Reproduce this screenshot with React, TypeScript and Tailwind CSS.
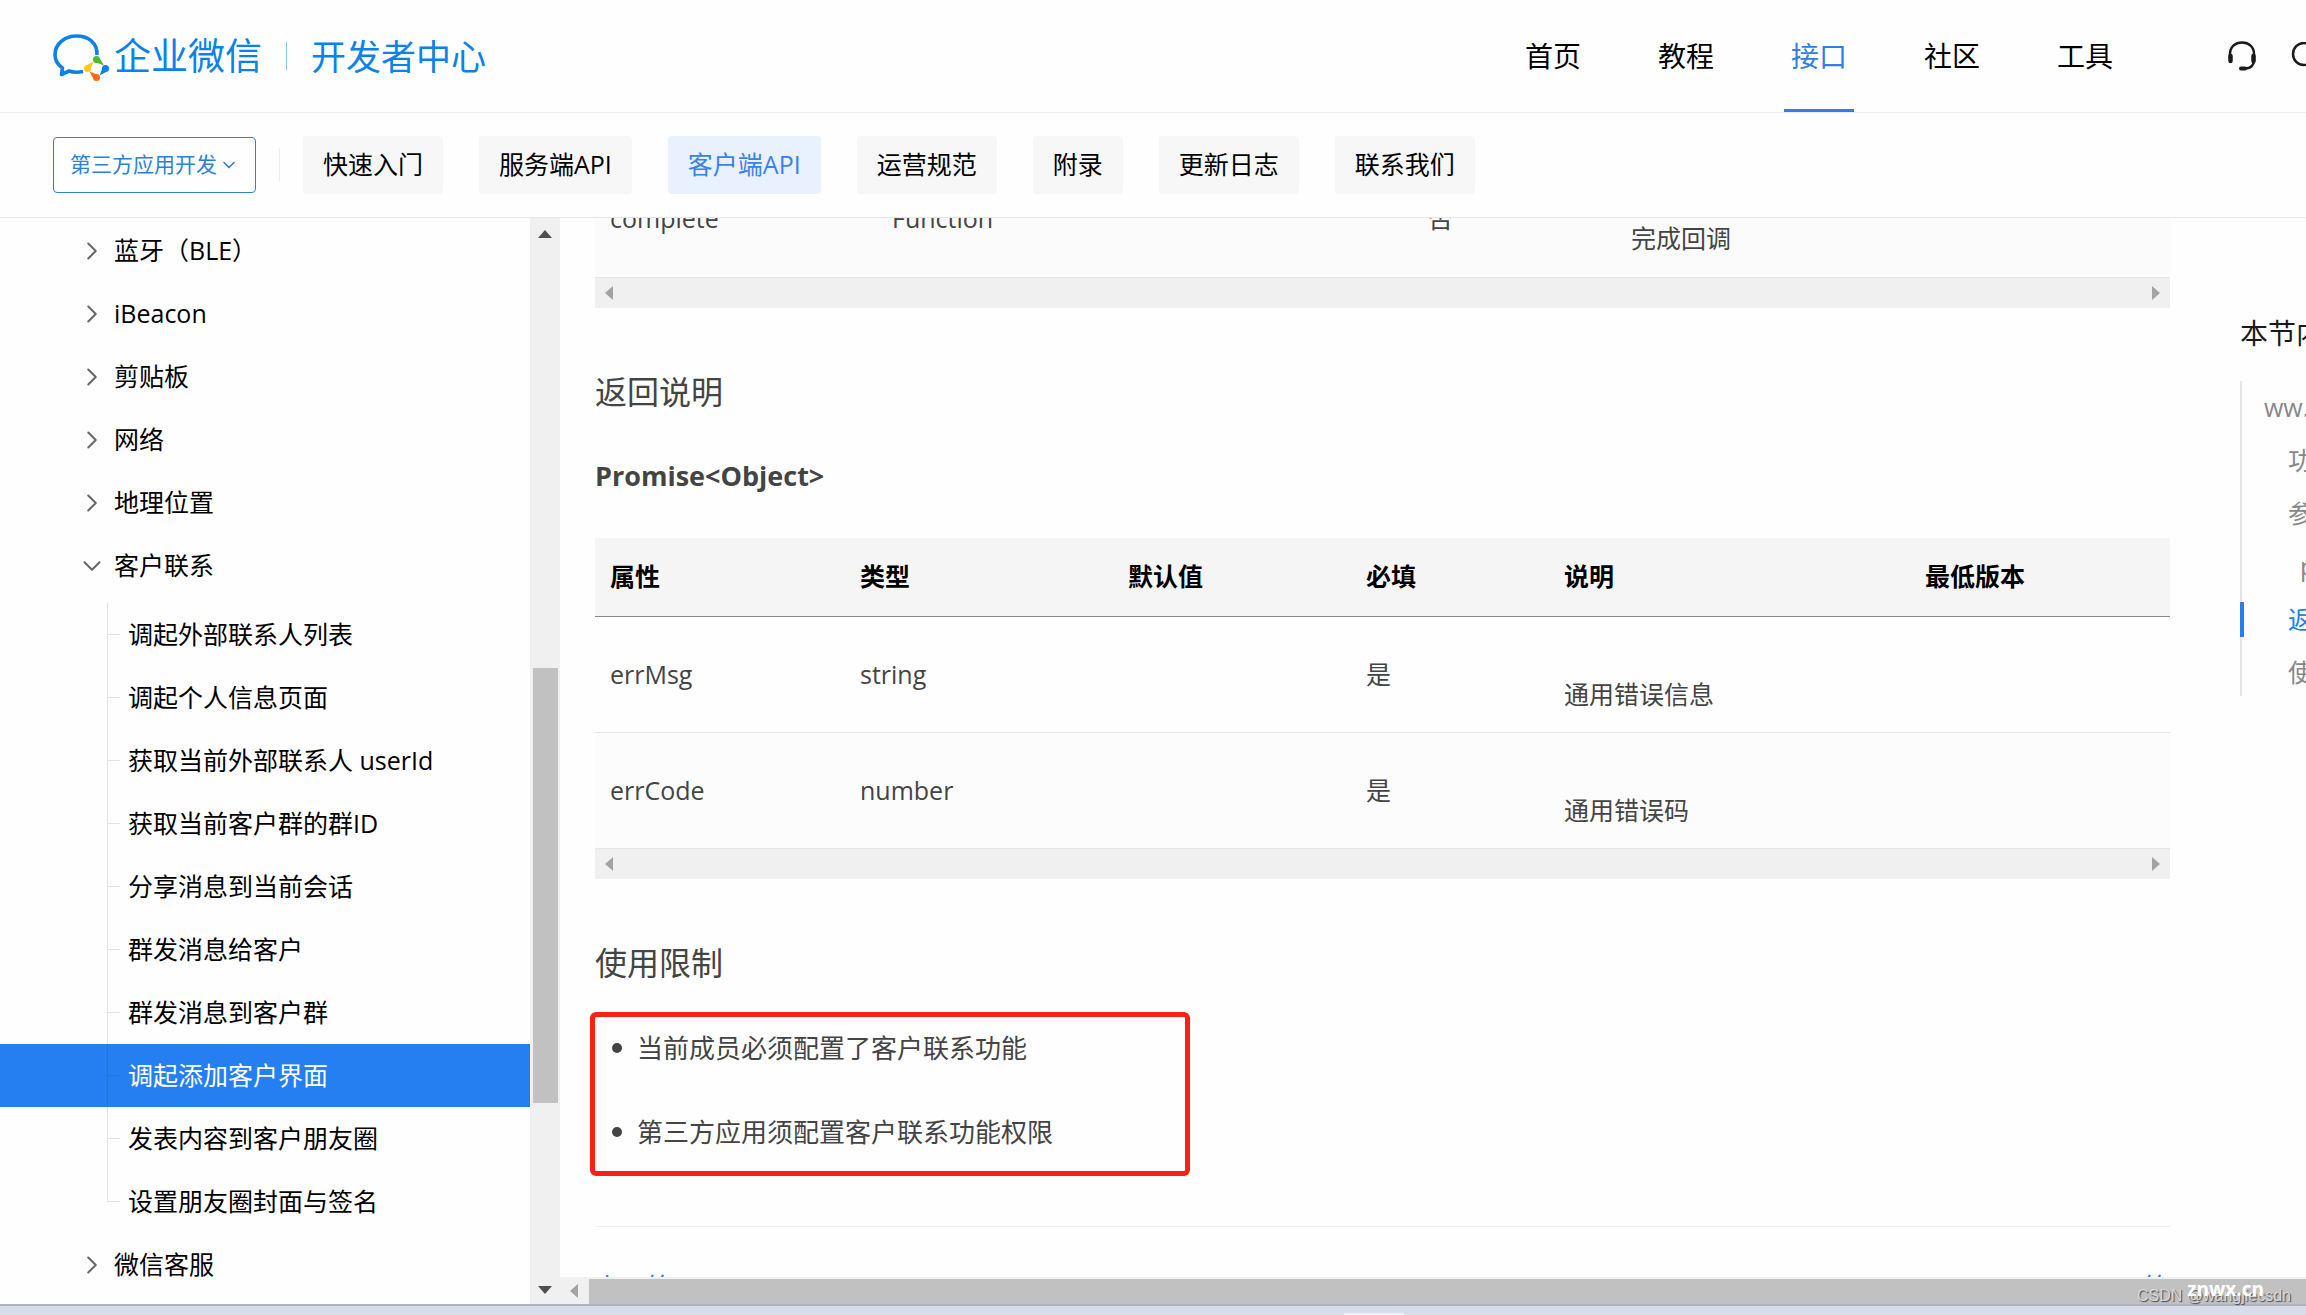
import { ChevronDown, ChevronRight } from "lucide-react";

const navItems = ["首页", "教程", "接口", "社区", "工具"];
const tabs = ["快速入门", "服务端API", "客户端API", "运营规范", "附录", "更新日志", "联系我们"];
const menus = ["蓝牙（BLE）", "iBeacon", "剪贴板", "网络", "地理位置"];
const subMenus = [
    "调起外部联系人列表",
    "调起个人信息页面",
    "获取当前外部联系人 userId",
    "获取当前客户群的群ID",
    "分享消息到当前会话",
    "群发消息给客户",
    "群发消息到客户群",
    "调起添加客户界面",
    "发表内容到客户朋友圈",
    "设置朋友圈封面与签名",
];
const toc = [
    { label: "ww.navigateToAddCustomer", indent: "pl-[22px]" },
    { label: "功能说明", indent: "pl-[46px]" },
    { label: "参数说明", indent: "pl-[46px]" },
    { label: "params", indent: "pl-[58px]" },
    { label: "返回说明", indent: "pl-[46px]", active: true },
    { label: "使用限制", indent: "pl-[46px]" },
];
const rows = [
    { name: "errMsg", type: "string", required: "是", desc: "通用错误信息" },
    { name: "errCode", type: "number", required: "是", desc: "通用错误码" },
];

function Logo() {
    return (
        <svg width="57" height="50" viewBox="0 0 57 50" fill="none" aria-hidden="true">
            <path
                d="M44 24C44.5 12 35.5 5 23.5 5C11.500 5 2 13 2 23.500C2 29.500 5 34 9.500 37L8.500 43.500L16 40C20 41.500 25 41.500 30 40.500"
                stroke="#0a82e6"
                strokeWidth="3.6"
                strokeLinejoin="round"
            />
            <g fill="#4cbb2c">
                <circle cx="43.500" cy="28.500" r="3.500" />
                <path d="M46.800 27.500L51 34.500L40.500 30.500Z" />
            </g>
            <g fill="#0a82e6">
                <circle cx="52.500" cy="37.500" r="3.500" />
                <path d="M53.500 40.800L46.500 44.500L50.500 34.500Z" />
            </g>
            <g fill="#fb6a10">
                <circle cx="43.500" cy="46.500" r="3.500" />
                <path d="M40.200 47.500L36.500 40.500L46.500 44.500Z" />
            </g>
            <g fill="#fccb0c">
                <circle cx="34.500" cy="37.500" r="3.500" />
                <path d="M33.500 34.200L40.500 30.500L36.500 40.500Z" />
            </g>
        </svg>
    );
}

function HeadsetIcon() {
    return (
        <svg width="30" height="30" viewBox="0 0 30 30" fill="none" stroke="#1a1a1a" strokeLinecap="round" aria-hidden="true">
            <path d="M3 17V13C3 6 8 1.500 15 1.500S27 6 27 13V19C27 24 24 27.500 18 27.500" strokeWidth="2.500" />
            <path d="M3.500 15V20M26.500 15V20" strokeWidth="4.500" />
            <path d="M14 27.500H18" strokeWidth="4" />
        </svg>
    );
}

function SearchIcon() {
    return (
        <svg width="28" height="28" viewBox="0 0 28 28" fill="none" stroke="#1a1a1a" strokeWidth="2.500" aria-hidden="true">
            <circle cx="13" cy="12" r="11" />
            <path d="M21 20L27 26" strokeLinecap="round" />
        </svg>
    );
}

/* horizontal scrollbar under each table */
function TableScrollbar() {
    return (
        <div className="h-[30px] bg-[#f0f0f0] flex items-center justify-between px-[10px]">
            <svg width="8" height="14" fill="#a3a3a3" aria-hidden="true"><path d="M8 0V14L0 7Z" /></svg>
            <svg width="8" height="14" fill="#a3a3a3" aria-hidden="true"><path d="M0 0V14L8 7Z" /></svg>
        </div>
    );
}

function MenuRow({ label, open }: { label: string; open?: boolean }) {
    return (
        <a href="#" className="h-[63px] pl-[77px] flex items-center gap-[7px]">
            {open
                ? <ChevronDown size={30} strokeWidth={1.6} className="text-[#666]" />
                : <ChevronRight size={30} strokeWidth={1.6} className="text-[#666]" />}
            <span>{label}</span>
        </a>
    );
}

export default function App() {
    return (
        <div className="relative h-screen flex flex-col overflow-hidden bg-[#fefefe] text-black text-[25px] whitespace-nowrap font-['Open_Sans','Noto_Sans_CJK_SC',sans-serif]">
            {/* Header */}
            <header className="h-[113px] shrink-0 border-b border-[#ececec] flex items-center pl-[53px] overflow-hidden">
                <a href="#" className="flex items-center gap-[4px] text-[#0a82e6] text-[37px]">
                    <Logo />
                    <span>企业微信</span>
                </a>
                <div className="w-px h-[28px] bg-[#8fc0ea] mx-[24px]" />
                <a href="#" className="pt-[2px] text-[#0a82e6] text-[35px]">开发者中心</a>
                <nav className="ml-auto h-full flex gap-[63px] text-[28px]">
                    {navItems.map((n) => (
                        <a
                            key={n}
                            href="#"
                            className={`w-[70px] h-full flex items-center justify-center border-y-3 border-t-transparent ${n === "接口"
                                ? "border-b-[#2f7fe6] text-[#2f7fe6]"
                                : "border-b-transparent"
                                }`}
                        >
                            {n}
                        </a>
                    ))}
                </nav>
                <button className="ml-[107px]" aria-label="客服"><HeadsetIcon /></button>
                <button className="ml-[34px] -mr-[13px] shrink-0" aria-label="搜索"><SearchIcon /></button>
            </header>

            {/* Tabs */}
            <div className="h-[105px] shrink-0 border-b border-[#e6e6e6] flex items-center pl-[53px]">
                <button className="w-[203px] h-[56px] border border-[#2f7fd8] rounded text-[#2f7fd8] text-[21px] flex items-center justify-center gap-[2px]">
                    第三方应用开发
                    <ChevronDown size={20} strokeWidth={2} />
                </button>
                <div className="w-px h-[34px] bg-[#ececec] mx-[23px]" />
                <div className="flex gap-[36px]">
                    {tabs.map((t) => (
                        <button
                            key={t}
                            className={`h-[58px] px-[20px] rounded ${t === "客户端API"
                                ? "bg-[#e8f1fd] text-[#3b82e8]"
                                : "bg-[#f7f7f7]"
                                }`}
                        >
                            {t}
                        </button>
                    ))}
                </div>
            </div>

            <div className="flex-1 min-h-0 flex">
                {/* Sidebar */}
                <aside className="w-[530px] shrink-0 pt-px overflow-hidden">
                    {menus.map((m) => <MenuRow key={m} label={m} />)}
                    <MenuRow label="客户联系" open />
                    <ul className="mt-[6px]">
                        {subMenus.map((s, i) => {
                            const active = s === "调起添加客户界面";
                            const last = i === subMenus.length - 1;
                            return (
                                <li key={s} className={`h-[63px] pl-[107px] flex ${active ? "bg-[#257ff0] text-white" : ""}`}>
                                    <div className={`w-px ${last ? "h-[32px]" : "h-full"} ${active ? "bg-[#2476de]" : "bg-[#e2e2e2]"}`} />
                                    <div className={`w-[12px] h-[32px] border-b ${active ? "border-[#2476de]" : "border-[#e2e2e2]"}`} />
                                    <a href="#" className="pl-[8px] flex items-center">{s}</a>
                                </li>
                            );
                        })}
                    </ul>
                    <MenuRow label="微信客服" />
                </aside>

                {/* Sidebar scrollbar */}
                <div className="w-[30px] shrink-0 bg-[#f0f0f0] flex flex-col items-center justify-between pt-[12px] pb-[10px]">
                    <svg width="14" height="8" fill="#505050" aria-hidden="true"><path d="M0 8H14L7 0Z" /></svg>
                    <div className="w-full flex-1 flex flex-col items-center">
                        <div className="grow-[431]" />
                        <div className="w-[25px] grow-[436] bg-[#c1c1c1]" />
                        <div className="grow-[183]" />
                    </div>
                    <svg width="14" height="8" fill="#505050" aria-hidden="true"><path d="M0 0H14L7 8Z" /></svg>
                </div>

                <div className="flex-1 min-w-0 flex flex-col">
                    <div className="flex-1 min-h-0 flex gap-[70px] pl-[35px] overflow-hidden">
                        <main className="flex-1 min-w-0 text-[#444]">
                            <table className="-mt-[57px] w-full table-fixed text-left bg-[#fbfbfb] border-b border-[#e6e6e6]">
                                <tbody>
                                    <tr className="h-[116px]">
                                        <td className="w-[282px] pl-[15px]">complete</td>
                                        <td className="w-[298px] pl-[15px]">Function</td>
                                        <td className="w-[238px]" />
                                        <td className="w-[203px] pl-[15px]">否</td>
                                        <td className="pl-[15px] pt-[40px]">完成回调</td>
                                    </tr>
                                </tbody>
                            </table>
                            <TableScrollbar />

                            <h3 className="mt-[60px] text-[32px] leading-[48px]">返回说明</h3>
                            <h4 className="mt-[40px] text-[27px] leading-[40px] font-bold">Promise&lt;Object&gt;</h4>

                            <table className="mt-[42px] w-full table-fixed text-left">
                                <thead>
                                    <tr className="h-[79px] bg-[#f5f5f5] text-black border-b border-[#888]">
                                        <th className="w-[250px] pl-[15px]">属性</th>
                                        <th className="w-[268px] pl-[15px]">类型</th>
                                        <th className="w-[238px] pl-[15px]">默认值</th>
                                        <th className="w-[198px] pl-[15px]">必填</th>
                                        <th className="w-[361px] pl-[15px]">说明</th>
                                        <th className="pl-[15px]">最低版本</th>
                                    </tr>
                                </thead>
                                <tbody>
                                    {rows.map((r) => (
                                        <tr key={r.name} className="h-[116px] border-b border-[#e6e6e6] even:bg-[#fcfcfc]">
                                            <td className="pl-[15px]">{r.name}</td>
                                            <td className="pl-[15px]">{r.type}</td>
                                            <td />
                                            <td className="pl-[15px]">{r.required}</td>
                                            <td className="pl-[15px] pt-[40px]">{r.desc}</td>
                                            <td />
                                        </tr>
                                    ))}
                                </tbody>
                            </table>
                            <TableScrollbar />

                            <h3 className="mt-[60px] text-[32px] leading-[48px]">使用限制</h3>
                            <ul className="mt-[25px] -ml-[5px] w-[600px] h-[164px] border-5 border-[#f92116] rounded-md pl-[17px] pt-[10px] text-[26px]">
                                <li className="h-[42px] mb-[42px] flex items-center gap-[15px]">
                                    <span className="size-[10px] rounded-full bg-[#444]" />当前成员必须配置了客户联系功能
                                </li>
                                <li className="h-[42px] flex items-center gap-[15px]">
                                    <span className="size-[10px] rounded-full bg-[#444]" />第三方应用须配置客户联系功能权限
                                </li>
                            </ul>

                            <hr className="mt-[50px] border-[#eee]" />
                            <div className="mt-[40px] flex justify-between text-[26px] leading-[40px] text-[#2f7fd8]">
                                <a href="#">上一篇</a>
                                <a href="#">下一篇</a>
                            </div>
                        </main>

                        {/* Table of contents */}
                        <aside className="w-[66px] shrink-0 pt-[94px] overflow-hidden">
                            <div className="text-[28px] leading-[42px] text-[#1a1a1a]">本节内容</div>
                            <ul className="mt-[27px] h-[315px] border-l-2 border-[#e5e5e5] text-[#888]">
                                {toc.map((t) => (
                                    <li key={t.label} className="h-[53px] flex items-center">
                                        <div className={`w-[4px] h-[35px] -ml-[2px] shrink-0 ${t.active ? "bg-[#257ff0]" : ""}`} />
                                        <a href="#" className={`-ml-[2px] ${t.indent} ${t.active ? "text-[#257ff0]" : ""}`}>{t.label}</a>
                                    </li>
                                ))}
                            </ul>
                        </aside>
                    </div>

                    {/* Page scrollbar */}
                    <div className="h-[27px] shrink-0 bg-[#f0f0f0] flex items-center pl-[10px]">
                        <svg width="8" height="14" fill="#a3a3a3" aria-hidden="true"><path d="M8 0V14L0 7Z" /></svg>
                        <div className="ml-[11px] mt-[2px] flex-1 h-[25px] bg-[#c1c1c1]" />
                    </div>
                </div>
            </div>

            {/* Taskbar edge */}
            <div className="h-[11px] shrink-0 border-t-2 border-[#b0b2c2] bg-[#d9dce9] flex items-end justify-center">
                <div className="ml-[442px] w-[60px] h-[2px] bg-[#eef0f9]" />
            </div>

            {/* Watermarks */}
            <div className="absolute right-[15px] bottom-[8px] text-[16px] leading-[22px] text-[#d8d8d8] [text-shadow:1px_1px_1px_#444] font-['Liberation_Sans',sans-serif]">CSDN @wangjiecsdn</div>
            <div className="absolute right-[42px] bottom-[13px] text-[19px] leading-[26px] font-bold text-white">znwx.cn</div>
        </div>
    );
}
